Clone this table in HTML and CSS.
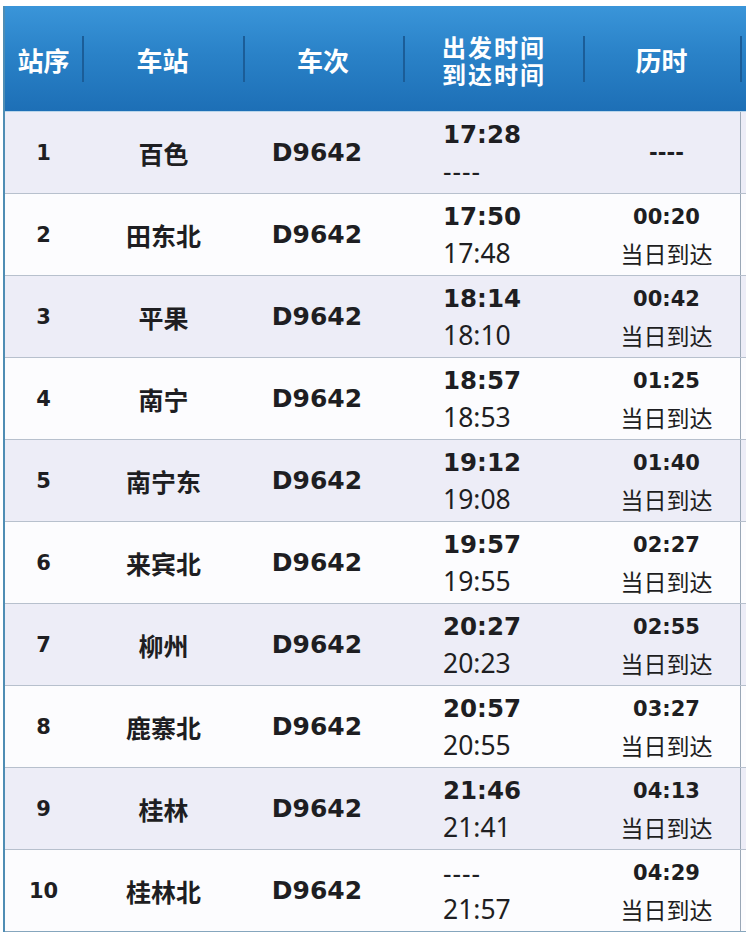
FILE: index.html
```html
<!DOCTYPE html>
<html lang="zh-CN">
<head>
<meta charset="utf-8">
<title>D9642 时刻表</title>
<link rel="stylesheet" href="styles.css">
</head>
<body>
<div class="tt">
  <div class="hd">
    <div class="hc">站序</div>
    <div class="hc sep">车站</div>
    <div class="hc sep">车次</div>
    <div class="hc sep two"><span>出发时间</span><span>到达时间</span></div>
    <div class="hc sep">历时</div>
    <div class="hc sep"></div>
  </div>

  <div class="row odd">
    <div class="c num">1</div><div class="c stn">百色</div><div class="c train">D9642</div>
    <div class="c times"><span class="dep">17:28</span><span class="arr dash">----</span></div>
    <div class="c dur"><span class="d">----</span></div><div class="c tail"></div>
  </div>
  <div class="row">
    <div class="c num">2</div><div class="c stn">田东北</div><div class="c train">D9642</div>
    <div class="c times"><span class="dep">17:50</span><span class="arr">17:48</span></div>
    <div class="c dur"><span class="d">00:20</span><span class="note">当日到达</span></div><div class="c tail"></div>
  </div>
  <div class="row odd">
    <div class="c num">3</div><div class="c stn">平果</div><div class="c train">D9642</div>
    <div class="c times"><span class="dep">18:14</span><span class="arr">18:10</span></div>
    <div class="c dur"><span class="d">00:42</span><span class="note">当日到达</span></div><div class="c tail"></div>
  </div>
  <div class="row">
    <div class="c num">4</div><div class="c stn">南宁</div><div class="c train">D9642</div>
    <div class="c times"><span class="dep">18:57</span><span class="arr">18:53</span></div>
    <div class="c dur"><span class="d">01:25</span><span class="note">当日到达</span></div><div class="c tail"></div>
  </div>
  <div class="row odd">
    <div class="c num">5</div><div class="c stn">南宁东</div><div class="c train">D9642</div>
    <div class="c times"><span class="dep">19:12</span><span class="arr">19:08</span></div>
    <div class="c dur"><span class="d">01:40</span><span class="note">当日到达</span></div><div class="c tail"></div>
  </div>
  <div class="row">
    <div class="c num">6</div><div class="c stn">来宾北</div><div class="c train">D9642</div>
    <div class="c times"><span class="dep">19:57</span><span class="arr">19:55</span></div>
    <div class="c dur"><span class="d">02:27</span><span class="note">当日到达</span></div><div class="c tail"></div>
  </div>
  <div class="row odd">
    <div class="c num">7</div><div class="c stn">柳州</div><div class="c train">D9642</div>
    <div class="c times"><span class="dep">20:27</span><span class="arr">20:23</span></div>
    <div class="c dur"><span class="d">02:55</span><span class="note">当日到达</span></div><div class="c tail"></div>
  </div>
  <div class="row">
    <div class="c num">8</div><div class="c stn">鹿寨北</div><div class="c train">D9642</div>
    <div class="c times"><span class="dep">20:57</span><span class="arr">20:55</span></div>
    <div class="c dur"><span class="d">03:27</span><span class="note">当日到达</span></div><div class="c tail"></div>
  </div>
  <div class="row odd">
    <div class="c num">9</div><div class="c stn">桂林</div><div class="c train">D9642</div>
    <div class="c times"><span class="dep">21:46</span><span class="arr">21:41</span></div>
    <div class="c dur"><span class="d">04:13</span><span class="note">当日到达</span></div><div class="c tail"></div>
  </div>
  <div class="row last">
    <div class="c num">10</div><div class="c stn">桂林北</div><div class="c train">D9642</div>
    <div class="c times"><span class="arr dash">----</span><span class="arr">21:57</span></div>
    <div class="c dur"><span class="d">04:29</span><span class="note">当日到达</span></div><div class="c tail"></div>
  </div>
</div>
</body>
</html>
```

FILE: styles.css
```css
html, body {
  margin: 0;
  padding: 0;
  background: #ffffff;
  overflow: hidden;
}

body {
  font-family: "Noto Sans CJK SC", "Noto Sans", sans-serif;
  color: #1e1e22;
}

.tt {
  margin: 6px 0 0 3px;
  width: 780px;
  border-left: 2px solid #4f8db4;
}

.hd,
.row {
  display: grid;
  grid-template-columns: 77px 161px 160px 180px 157px 1fr;
}

.hd {
  height: 105px;
  background: linear-gradient(#3a95d9 0%, #2a82c8 45%, #1d6fb6 100%);
  border-bottom: 1px solid #b9d5ea;
}

.hc {
  display: flex;
  align-items: center;
  justify-content: center;
  color: #ffffff;
  font-family: "Noto Sans CJK SC", sans-serif;
  font-weight: 700;
  font-size: 26px;
  line-height: 30px;
  padding-top: 2px;
  text-align: center;
}

.hc.sep {
  background: linear-gradient(#1b5d98, #1b5d98) left 30px / 2px 46px no-repeat;
}

.hc.two {
  flex-direction: column;
  font-size: 24px;
  line-height: 27px;
  letter-spacing: 2px;
  padding-left: 2px;
}

.row {
  height: 81px;
  background: #fcfcfe;
  border-bottom: 1px solid #b7c0cd;
}

.row.odd {
  background: #ededf7;
}

.row.last {
  border-bottom-color: #86a6bd;
}

.c {
  display: flex;
  align-items: center;
  justify-content: center;
}

.num {
  font-family: "DejaVu Sans", sans-serif;
  font-weight: 700;
  font-size: 21px;
}

.stn {
  font-family: "Noto Sans CJK SC", sans-serif;
  font-weight: 700;
  font-size: 25px;
  padding-left: 2px;
}

.train {
  font-family: "DejaVu Sans", sans-serif;
  font-weight: 700;
  font-size: 25px;
  padding-right: 12px;
}

.times {
  flex-direction: column;
  align-items: flex-start;
  padding-left: 40px;
  line-height: 36px;
}

.dep {
  font-family: "DejaVu Sans", sans-serif;
  font-weight: 700;
  font-size: 24.5px;
}

.arr {
  font-family: "Noto Sans", "Noto Sans CJK SC", sans-serif;
  font-weight: 400;
  font-size: 26.5px;
}

.arr.dash {
  letter-spacing: 1px;
}

.dur {
  flex-direction: column;
  line-height: 36px;
  padding-left: 10px;
}

.d {
  font-family: "DejaVu Sans", sans-serif;
  font-weight: 700;
  font-size: 21px;
}

.note {
  font-family: "Noto Sans CJK SC", sans-serif;
  font-weight: 400;
  font-size: 23px;
}

.tail {
  border-left: 1px solid #9aa7b6;
}
```
